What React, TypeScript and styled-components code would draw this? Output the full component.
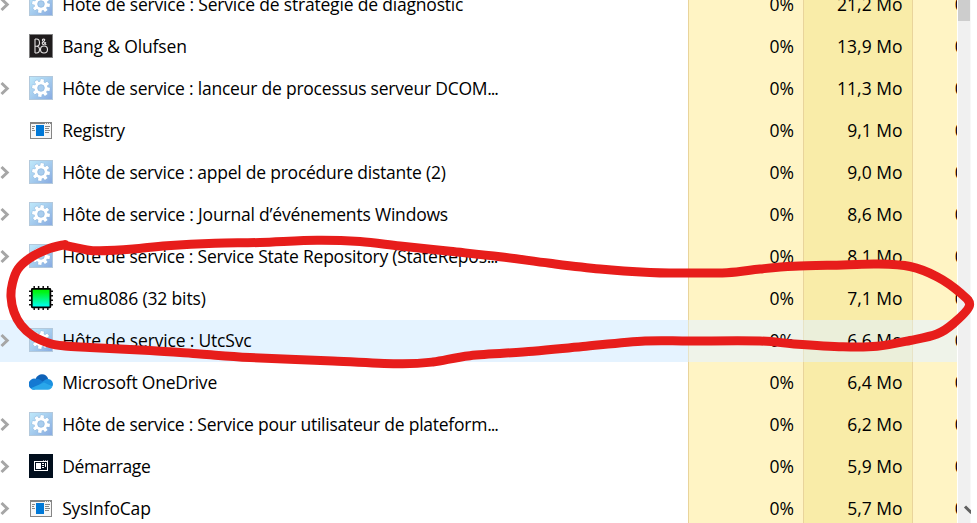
import React from "react";
import styled, { createGlobalStyle } from "styled-components";

const GlobalStyle = createGlobalStyle`
  html, body { margin: 0; padding: 0; background: #fff; overflow: hidden; }
  * { box-sizing: border-box; }
`;

const Window = styled.main`
  position: relative;
  display: flex;
  width: 977px;
  height: 523px;
  overflow: hidden;
  background: #fff;
  color: #000;
  font-family: "Open Sans", "Noto Sans", sans-serif;
  font-size: 17.5px;
`;

const Table = styled.div`
  flex: none;
  width: 957px;
  margin-top: -16px;
`;

const Row = styled.div<{ $hover?: boolean }>`
  display: grid;
  grid-template-columns: 688px 115px 109px 45px;
  height: 42px;
  background: ${(p) => (p.$hover ? "#e5f3ff" : "#fff")};
`;

const NameCell = styled.div`
  display: flex;
  align-items: center;
  height: 42px;
  min-width: 0;
`;

const Expander = styled.span`
  display: flex;
  width: 29px;
  height: 24px;
  margin-top: -2px;
`;

const IconSlot = styled.span`
  display: flex;
  width: 24px;
  height: 24px;
  margin: -2px 9.2px 0 0;
`;

const Label = styled.span<{ $spacing: number }>`
  height: 42px;
  white-space: pre;
  line-height: 40px;
  letter-spacing: ${(p) => p.$spacing}px;
`;

const Ellipsis = styled.span`
  letter-spacing: -1.1px;
`;

const ValueCell = styled.div<{ $strong?: boolean; $hover?: boolean }>`
  border-left: 1px solid ${(p) => (p.$hover ? "#e8e3c6" : "#e9d49b")};
  background: ${(p) =>
    p.$hover ? (p.$strong ? "#ebefda" : "#eff3e9") : p.$strong ? "#f9eca8" : "#fff4c4"};
  padding-right: ${(p) => (p.$strong ? 9.5 : 9)}px;
  line-height: 40px;
  text-align: right;
  white-space: pre;
  overflow: hidden;
`;

const DiskCell = styled(ValueCell)`
  padding: 0 0 0 41.8px;
  text-align: left;
`;

const ScrollTrack = styled.div`
  display: flex;
  flex-direction: column;
  justify-content: space-between;
  width: 13px;
  margin-left: 1px;
  background: #f0f0f0;
  border-right: 1px solid #f8f8f8;
`;

const ScrollThumb = styled.div`
  height: 21px;
  background: #cdcdcd;
`;

const ScrollArrow = styled.svg`
  display: block;
  width: 13px;
  height: 22px;
`;

const Ink = styled.svg`
  position: absolute;
  inset: 0;
  pointer-events: none;
`;

const GEAR = (() => {
  const pts: string[] = [];
  const teeth = 8;
  for (let i = 0; i < teeth; i++) {
    const a = (i * 2 * Math.PI) / teeth + 0.15;
    const spots: [number, number][] = [
      [-0.27, 6.5],
      [-0.19, 9],
      [0.19, 9],
      [0.27, 6.5],
    ];
    spots.forEach(([d, r]) =>
      pts.push(`${(12 + r * Math.sin(a + d)).toFixed(2)},${(12 - r * Math.cos(a + d)).toFixed(2)}`)
    );
  }
  return pts.join(" ");
})();

const GearIcon = () => (
  <svg width="24" height="24" viewBox="0 0 24 24">
    <defs>
      <linearGradient id="tile" x1="0" y1="0" x2="1" y2="1">
        <stop offset="0" stopColor="#bfe9fb" />
        <stop offset="0.5" stopColor="#a5ccee" />
        <stop offset="1" stopColor="#86a9e0" />
      </linearGradient>
    </defs>
    <rect x="0.5" y="0.5" width="23" height="23" fill="url(#tile)" stroke="#b3c9dc" />
    <polygon points={GEAR} fill="#fff" stroke="#8db5dc" strokeWidth="0.9" paintOrder="stroke" />
    <circle cx="12" cy="12" r="3.3" fill="#a9cdee" stroke="#8fb7df" strokeWidth="0.8" />
  </svg>
);

const BangIcon = () => (
  <svg width="24" height="24" viewBox="0 0 24 24" fill="none" stroke="#e4e2e2" strokeWidth="1.1">
    <rect width="24" height="24" fill="#1f1c1d" />
    <path d="M0 .5H24M.5 0V24M23.5 0V24M0 23.5H24" stroke="#77797a" strokeWidth="0.6" />
    <path d="M6 5v14M6 5h1.5q3 0 3 3.8 0 3.4-3 3.4H6M7.5 12.2q3 0 3 3.4t-3 3.4H6" />
    <circle cx="15" cy="15.5" r="3.5" />
    <path d="M17.2 10.8l-3.6-4q-.6-1.6.9-1.8 1.7 0 1 1.6l-2 1.7q-.8 2 1 2.2 1.8-.2 2.3-2.4" />
  </svg>
);

const WindowIcon = () => (
  <svg width="24" height="24" viewBox="0 0 24 24" shapeRendering="crispEdges">
    <rect x="1" y="4" width="22" height="17" fill="#858585" />
    <rect x="2" y="6" width="20" height="14" fill="#f6f6f6" />
    <path d="M16 5h1M18 5h1M20 5h1" stroke="#eee" />
    <rect x="7" y="7" width="8" height="11" fill="#0078d7" />
    <path d="M3 8.5h3M3 10.5h2M3 12.5h3M16 8.5h5M16 10.5h4M16 12.5h5M16 14.5h4" stroke="#888" />
  </svg>
);

const ChipIcon = () => (
  <svg width="24" height="24" viewBox="0 0 24 24">
    <defs>
      <linearGradient id="chip" x1="0" y1="0" x2="0" y2="1">
        <stop offset="0" stopColor="#00f000" />
        <stop offset="0.2" stopColor="#00f51c" />
        <stop offset="1" stopColor="#00ffff" />
      </linearGradient>
    </defs>
    <path
      d="M5.2 0V24M9.6 0V24M14.2 0V24M18.8 0V24M0 5.2H24M0 9.7H24M0 14.3H24M0 18.8H24"
      stroke="#111"
      strokeWidth="1.5"
    />
    <rect x="2.8" y="2.8" width="18.6" height="18.6" rx="0.6" fill="url(#chip)" stroke="#000" strokeWidth="1.7" />
  </svg>
);

const CloudIcon = () => (
  <svg width="24" height="24" viewBox="0 0 24 24">
    <path d="M6.5 8.8C8 5.8 10.4 4.3 13 4.3c3 0 5.4 1.9 6.2 4.8L16 14z" fill="#0f62b8" />
    <path d="M5.2 19.8A5.6 5.6 0 1 1 7 8.9c1.4-.3 3 .1 4.5 1L16 13z" fill="#1479d2" />
    <path d="M10.5 14.5l4.3-3.7c1.6-1.3 2.7-1.9 4.2-1.9 3 .1 5 2.7 5 5.4 0 .7-.2 1.4-.5 2z" fill="#1b91e0" />
    <path d="M1.8 18.2L15 12.4l8.5 4.2c-.8 2-2.5 3.2-4.6 3.2H5.4c-1.5 0-2.8-.5-3.6-1.6z" fill="#2aa7ea" />
  </svg>
);

const StartupIcon = () => (
  <svg width="24" height="24" viewBox="0 0 24 24" shapeRendering="crispEdges">
    <rect width="24" height="24" fill="#010e1d" />
    <rect x="5.5" y="7.5" width="13" height="9" fill="none" stroke="#fff" />
    <path d="M14 6.5h1M16 6.5h1M18 6.5h1" stroke="#8b939b" />
    <rect x="7" y="9" width="5" height="6" fill="#fff" />
    <path d="M13 9.5h2M13 11.5h2M13 13.5h2M16.5 9v4" stroke="#fff" />
  </svg>
);

const ICONS = {
  gear: GearIcon,
  bang: BangIcon,
  window: WindowIcon,
  chip: ChipIcon,
  cloud: CloudIcon,
  startup: StartupIcon,
};

interface Process {
  name: string;
  icon: keyof typeof ICONS;
  memory: string;
  spacing: number;
  cut?: boolean;
  group?: boolean;
  hover?: boolean;
}

const processes: Process[] = [
  { name: "Hôte de service : Service de stratégie de diagnostic", icon: "gear", memory: "21,2", spacing: -0.19, group: true },
  { name: "Bang & Olufsen", icon: "bang", memory: "13,9", spacing: -0.15 },
  { name: "Hôte de service : lanceur de processus serveur DCOM", icon: "gear", memory: "11,3", spacing: -0.22, cut: true, group: true },
  { name: "Registry", icon: "window", memory: "9,1", spacing: -0.3 },
  { name: "Hôte de service : appel de procédure distante (2)", icon: "gear", memory: "9,0", spacing: -0.24, group: true },
  { name: "Hôte de service : Journal d’événements Windows", icon: "gear", memory: "8,6", spacing: -0.2, group: true },
  { name: "Hôte de service : Service State Repository (StateRepos", icon: "gear", memory: "8,1", spacing: -0.23, cut: true, group: true },
  { name: "emu8086 (32 bits)", icon: "chip", memory: "7,1", spacing: -0.14 },
  { name: "Hôte de service : UtcSvc", icon: "gear", memory: "6,6", spacing: -0.18, group: true, hover: true },
  { name: "Microsoft OneDrive", icon: "cloud", memory: "6,4", spacing: -0.22 },
  { name: "Hôte de service : Service pour utilisateur de plateform", icon: "gear", memory: "6,2", spacing: -0.24, cut: true, group: true },
  { name: "Démarrage", icon: "startup", memory: "5,9", spacing: -0.4, group: true },
  { name: "SysInfoCap", icon: "window", memory: "5,7", spacing: -0.17, group: true },
];

const Chevron = () => (
  <svg width="12" height="24" viewBox="0 0 12 24">
    <path d="M1.5 7L7.2 12.5L1.5 18" fill="none" stroke="#a6a6a6" strokeWidth="3" />
  </svg>
);

const STROKE: [number, number][] = [
  [65, 244.5], [48, 249], [30, 258], [18, 269], [12.5, 283], [11, 297], [14, 312], [21, 325],
  [33, 336], [50, 343.5], [65, 346], [90, 347.5], [150, 350.5], [200, 354], [250, 357.5],
  [333, 361], [400, 363.8], [433, 362], [470, 355.7], [533, 351.3], [583, 346.5], [645, 341],
  [690, 341], [760, 341], [794, 344], [843, 346.8], [877, 346.3], [910, 340.5], [937, 334],
  [954, 323], [969.5, 305.5], [960, 292.7], [937, 276.7], [910, 266.5], [877, 264], [843, 265],
  [794, 266.3], [760, 269], [727, 272.7], [677, 273], [650, 272.5], [600, 269], [550, 263.3],
  [500, 256.7], [450, 251.3], [400, 246], [360, 241.6], [317, 240.3], [260, 242.5], [215, 243.2],
  [167, 245.7], [133, 249], [100, 250.8], [87, 250], [65, 245.5],
];

// Catmull-Rom spline through the pen samples, written as cubic segments.
const strokePath = STROKE.slice(0, -1).reduce((d, p, i) => {
  const prev = STROKE[Math.max(0, i - 1)];
  const next = STROKE[i + 1];
  const after = STROKE[Math.min(STROKE.length - 1, i + 2)];
  const c1 = [p[0] + (next[0] - prev[0]) / 6, p[1] + (next[1] - prev[1]) / 6];
  const c2 = [next[0] - (after[0] - p[0]) / 6, next[1] - (after[1] - p[1]) / 6];
  return `${d} C${c1.join(" ")} ${c2.join(" ")} ${next.join(" ")}`;
}, `M${STROKE[0].join(" ")}`);

export default function App() {
  return (
    <>
      <GlobalStyle />
      <Window>
        <Table>
          {processes.map((p) => {
            const Icon = ICONS[p.icon];
            return (
              <Row key={p.name} $hover={p.hover}>
                <NameCell>
                  <Expander>{p.group && <Chevron />}</Expander>
                  <IconSlot>
                    <Icon />
                  </IconSlot>
                  <Label $spacing={p.spacing}>
                    {p.name}
                    {p.cut && <Ellipsis>...</Ellipsis>}
                  </Label>
                </NameCell>
                <ValueCell $hover={p.hover}>0%</ValueCell>
                <ValueCell $strong $hover={p.hover}>{p.memory} Mo</ValueCell>
                <DiskCell $hover={p.hover}>0</DiskCell>
              </Row>
            );
          })}
        </Table>
        <ScrollTrack>
          <ScrollThumb />
          <ScrollArrow viewBox="0 0 13 22">
            <path d="M7 5.5L12.5 11L18 5.5" fill="none" stroke="#606060" strokeWidth="3" />
          </ScrollArrow>
        </ScrollTrack>
        <Ink width="977" height="523" viewBox="0 0 977 523">
          <path d={strokePath} fill="none" stroke="#e71d1b" strokeWidth="9" strokeLinecap="round" strokeLinejoin="round" />
        </Ink>
      </Window>
    </>
  );
}
